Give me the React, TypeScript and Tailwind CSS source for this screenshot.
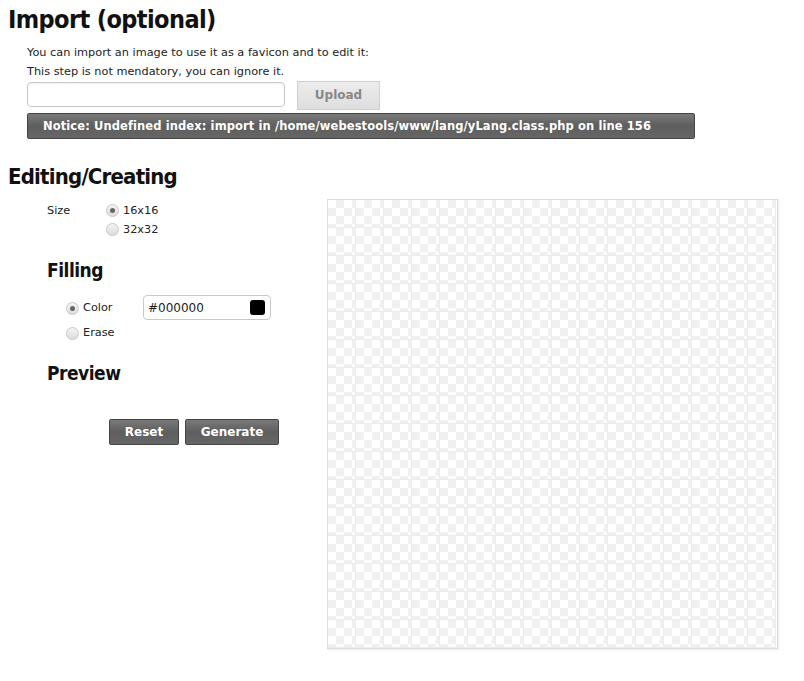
import React from "react";

const heading = { fontFamily: '"DejaVu Sans Condensed", "DejaVu Sans", sans-serif' };

function Radio({ checked }: { checked?: boolean }) {
  return (
    <span className="inline-flex items-center justify-center w-[13px] h-[13px] rounded-full border border-[#c8c8c8] bg-gradient-to-b from-[#f4f4f4] to-[#dcdcdc]">
      {checked && <span className="w-[5px] h-[5px] rounded-full bg-[#666]" />}
    </span>
  );
}

export default function App() {
  const cells = Array.from({ length: 256 });
  return (
    <div className="w-[804px] h-[681px] bg-white text-[#222] relative overflow-hidden" style={{ fontFamily: '"DejaVu Sans", Verdana, sans-serif' }}>
      <div className="pl-[8px] pt-[4px]">
        <h1 className="text-[25px] font-bold leading-[32px] tracking-[-0.6px] text-[#111]" style={heading}>Import (optional)</h1>
        <div className="pl-[19px] mt-[7px] text-[11.3px] leading-[19px] text-[#222]">
          <div>You can import an image to use it as a favicon and to edit it:</div>
          <div>This step is not mendatory, you can ignore it.</div>
          <div className="flex items-start mt-[1px]">
            <div className="w-[258px] h-[25px] rounded-[4px] border border-[#c9c9c9] bg-white shadow-[inset_0_1px_2px_rgba(0,0,0,0.06)]" />
            <div className="ml-[12px] w-[83px] h-[29px] -mt-[1px] border border-[#d0d0d0] bg-gradient-to-b from-[#ececec] to-[#dedede] flex items-center justify-center text-[12px] font-bold text-[#888]">Upload</div>
          </div>
          <div className="mt-[3px] w-[668px] h-[26px] rounded-[2px] border border-[#444] bg-gradient-to-b from-[#7a7a7a] via-[#5e5e5e] to-[#666] flex items-center pl-[15px] text-[11.5px] font-bold text-white tracking-[0.1px]">
            Notice: Undefined index: import in /home/webestools/www/lang/yLang.class.php on line 156
          </div>
        </div>
        <h2 className="mt-[23px] text-[22px] font-bold leading-[30px] tracking-[-0.8px] text-[#111]" style={heading}>Editing/Creating</h2>
        <div className="flex mt-[7px]">
          <div className="w-[319px] shrink-0 pl-[39px] pt-[2px]">
            <div className="flex text-[11.3px] leading-[19px]">
              <div className="w-[59px]">Size</div>
              <div>
                <div className="flex items-center gap-[4px]"><Radio checked />16x16</div>
                <div className="flex items-center gap-[4px]"><Radio />32x32</div>
              </div>
            </div>
            <h3 className="mt-[18px] text-[19px] font-bold leading-[26px] tracking-[-0.5px] text-[#111]" style={heading}>Filling</h3>
            <div className="pl-[19px] mt-[12px] text-[11.3px]">
              <div className="flex items-center">
                <div className="w-[77px] flex items-center gap-[4px] mt-[2px]"><Radio checked />Color</div>
                <div className="w-[128px] h-[25px] rounded-[4px] border border-[#c9c9c9] flex items-center pl-[4px] pr-[5px] justify-between">
                  <span className="text-[12px]">#000000</span>
                  <span className="w-[15px] h-[15px] rounded-[3px] bg-black" />
                </div>
              </div>
              <div className="flex items-center gap-[4px] mt-[5px]"><Radio />Erase</div>
            </div>
            <h3 className="mt-[18px] text-[19px] font-bold leading-[26px] tracking-[-0.5px] text-[#111]" style={heading}>Preview</h3>
            <div className="flex gap-[6px] pl-[62px] mt-[33px]">
              <div className="w-[70px] h-[26px] rounded-[2px] border border-[#444] bg-gradient-to-b from-[#7a7a7a] via-[#5e5e5e] to-[#666] flex items-center justify-center text-[12px] font-bold text-white">Reset</div>
              <div className="w-[94px] h-[26px] rounded-[2px] border border-[#444] bg-gradient-to-b from-[#7a7a7a] via-[#5e5e5e] to-[#666] flex items-center justify-center text-[12px] font-bold text-white">Generate</div>
            </div>
          </div>
          <div className="w-[451px] h-[450px] border border-[#dcdcdc] grid grid-cols-[repeat(16,28px)] grid-rows-[repeat(16,28px)] shadow-[1px_1px_2px_rgba(0,0,0,0.08)]">
            {cells.map((_, i) => (
              <div
                key={i}
                className="w-[28px] h-[28px] border-r border-b border-[#ececec] bg-[conic-gradient(#f0f0f0_25%,#ffffff_0_50%,#f0f0f0_0_75%,#ffffff_0)] bg-[length:16px_16px]"
              />
            ))}
          </div>
        </div>
      </div>
    </div>
  );
}
